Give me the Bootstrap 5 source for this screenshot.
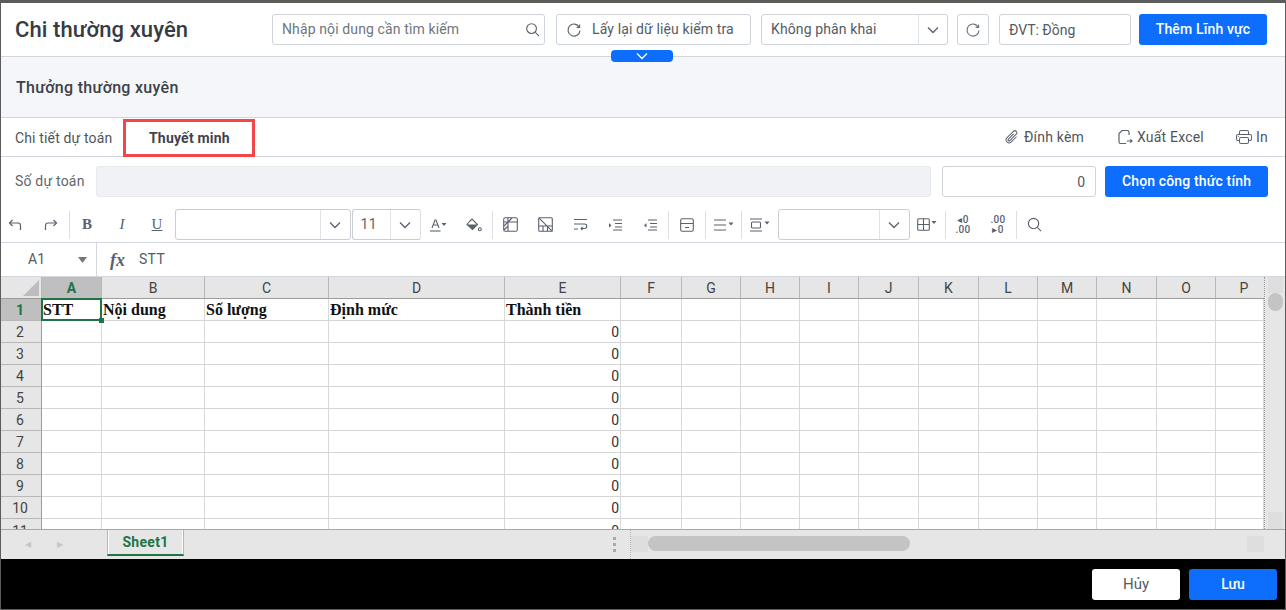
<!DOCTYPE html>
<html lang="vi">
<head>
<meta charset="utf-8">
<title>Chi thường xuyên</title>
<link href="https://cdn.jsdelivr.net/npm/bootstrap@5.3.0/dist/css/bootstrap.min.css" rel="stylesheet">
<style>
html,body{height:610px;overflow:hidden;background:#fff}
body{font-family:Roboto,"Liberation Sans",sans-serif;font-size:14px;color:#4a4f57}
.app-shell{height:610px;border:1px solid #5c5c5c;border-top:3px solid #5c5c5c;position:relative}
.top-head{height:54px;border-bottom:1px solid #d3d6de;padding-left:14px;flex:none}
.page-title{font-size:22px;font-weight:500;color:#363b42;margin:0;line-height:30px;letter-spacing:.1px}
.fld{height:31px;border:1px solid #cfd3da;border-radius:3px;background:#fff;font-size:14px;color:#555b63;flex:none;letter-spacing:.12px}
.fld-text{height:31px;border:1px solid #cfd3da;border-radius:3px;font-size:14px;padding:0 9px;color:#555b63;box-shadow:none;flex:none}
.fld-text::placeholder{color:#7b8087}
.c-search{width:273px;margin-right:11px;padding-left:9px}
.c-search input{border:0;outline:0;width:239px;font-size:14px;color:#555;background:transparent;padding:0;letter-spacing:.12px}
.c-search input::placeholder{color:#70757c}
.c-reload{width:195px;margin-right:10px}
.c-reload svg{margin:0 10px 0 9px}
.c-split{width:187px;margin-right:9px}
.c-split .cap{padding-left:9px}
.c-split .arr{width:29px;height:100%;border-left:1px solid #dfe2e7}
.c-ref{width:32px;margin-right:10px}
.c-unit{width:132px;margin-right:8px}
.btn-main{height:31px;border-radius:3px;font-size:14px;font-weight:500;padding:0;background:#0d6efd;border:0;flex:none;letter-spacing:.15px}
.c-add{width:128px;margin-right:18px}
.pull-tab{position:absolute;left:610px;top:47px;width:62px;height:12px;background:#0d6efd;border-radius:4px;z-index:3}
.sec-band{height:61px;background:#f4f6fa;border-bottom:1px solid #d3d6de;padding-left:15px;padding-top:1px;flex:none}
.sec-band h2{font-size:16px;font-weight:500;color:#3c4148;margin:0;letter-spacing:.3px}
.tab-band{height:39px;border-bottom:1px solid #d3d6de;flex:none;padding-left:14px}
.tab-off{width:108px;font-size:14px;color:#50555c;letter-spacing:.15px;padding-top:3px}
.tab-on{width:132px;height:38px;margin-top:2px;border:3px solid #f44649;font-weight:700;color:#3f444b;font-size:14px;padding-left:23px;letter-spacing:.2px}
.tool-link{font-size:14px;color:#50555c;letter-spacing:.2px}
.t-att{width:113px}.t-xl{width:119px}.t-pr{width:49px}
.est-row{height:47px;padding-left:14px;padding-top:2px;flex:none}
.est-lbl{width:81px;color:#61666d;font-size:14px;letter-spacing:.2px}
.est-box{width:835px;background:#f0f2f5!important;border-color:#e7e9ee;margin-right:11px}
.est-num{width:154px;text-align:right;margin-right:9px;padding-right:10px}
.c-pick{width:163px}
.fmt-bar{height:39px;border-bottom:1px solid #d3d6de;flex:none;padding-top:3px}
.tb-btn{width:35px;height:28px;flex:none;color:#5a626f}
.tb-a{width:28px}.tb-b{margin-left:4.5px}.tb-w{width:35.5px}.tb-x{width:36px}
.tb-sep{width:1px;height:28px;background:#dcdfe4;flex:none}
.let{font-family:"Liberation Serif",serif;font-size:15px;line-height:1;color:#5a626f}
.sel-box{height:31px;border:1px solid #c9cdd4;border-radius:3px;background:#fff;flex:none}
.s-font{width:176px;margin-right:1px}.s-size{width:69px;border-right-color:#dcdfe4}.s-fill{width:132px;margin-left:1px}
.sel-box .arr{width:30px;height:100%;border-left:1px solid #dfe2e7}
.s-size .cap{padding-left:8px;font-size:14px;color:#5f656d;letter-spacing:.5px}
.deci{font-size:10px;line-height:10px;font-weight:500;text-align:center;color:#5a626f;letter-spacing:.3px}
.form-line{height:34px;border-bottom:1px solid #d3d6de;flex:none}
.name-cell{width:96px;height:100%;border-right:1px solid #d3d6de;padding-left:27px;padding-right:9px;color:#555b63}
.fx-mark{font-family:"Liberation Serif",serif;font-style:italic;font-weight:700;font-size:18px;line-height:1;color:#5a626f;margin-left:13px;width:29px}
.form-val{color:#555b63;letter-spacing:.3px}
.sheet-area{height:252px;flex:none;overflow:hidden}
.sheet-view{width:1263px;overflow:hidden;flex:none}
.sheet-tbl{table-layout:fixed;border-collapse:separate;border-spacing:0;width:1263px}
.sheet-tbl th,.sheet-tbl td{height:22px;padding:0 2px;border-right:1px solid #d9d9d9;border-bottom:1px solid #d4d4d4;line-height:1;white-space:nowrap;overflow:hidden}
.sheet-tbl thead th{background:#e6e6e6;font-weight:400;text-align:center;color:#444;font-size:14px;border-bottom:1px solid #9c9c9c;border-right:1px solid #b8b8b8;height:22px}
.sheet-tbl thead th.tail{padding-left:10px;border-right:0}
.sheet-tbl tbody th{background:#e6e6e6;font-weight:400;text-align:center;color:#444;font-size:14px;border-right:1px solid #9c9c9c;border-bottom:1px solid #b8b8b8;padding:0 2px 0 0}
.sheet-tbl thead th.hot,.sheet-tbl tbody th.hot{background:#bfbfbf;color:#217346;font-weight:700}
.sheet-tbl td.hd{font-family:"Liberation Serif",serif;font-weight:700;font-size:16px;color:#111;padding-left:1px}
.sheet-tbl td.nu{text-align:right;font-size:14px;color:#333;padding-right:1px}
.sheet-tbl tbody tr:last-child th,.sheet-tbl tbody tr:last-child td{vertical-align:top;padding-top:5px}
.corner{position:relative;overflow:hidden}
.corner i{position:absolute;right:2px;bottom:2px;width:0;height:0;border-style:solid;border-width:0 0 16px 16px;border-color:transparent transparent #bdbdbd transparent}
.cur-box{position:relative;overflow:visible!important}
.cur-ring{position:absolute;left:-1px;top:-1px;right:-1px;bottom:-1px;border:2px solid #217346;z-index:2}
.cur-dot{position:absolute;right:-3px;bottom:-3px;width:5px;height:5px;background:#217346;z-index:3}
.v-rail{width:21px;background:#e6e6e6;border-left:1px dotted #9a9a9a;flex:none;padding:0 2px 0 3px}
.v-top{height:16px;background:#dedede}
.v-thumb{height:18px;background:#c4c4c4;border-radius:8px}
.v-end{height:17px;background:#dedede}
.tab-strip{height:30px;background:#e6e6e6;border-top:1px solid #a8a8a8;flex:none}
.nav-arrows{width:106px;padding-left:24px}
.nav-arrows span{width:32px;display:inline-block;color:#c6c6c6;font-size:8px}
.sheet-tab{width:77px;height:26px;background:#e6e6e6;border-left:1px solid #b5b5b5;border-right:1px solid #b5b5b5;border-bottom:2px solid #217346;color:#217346;font-weight:700;font-size:14px;letter-spacing:.3px;box-shadow:inset 1px 0 #fff,inset -1px 0 #fff}
.strip-fill{width:446px;padding-right:14px}
.grip{width:3px;height:3px;background:#a9a9a9;margin:1px 0 2px}
.h-rail{height:100%;border-left:1px dotted #b5b5b5;flex:1;padding-right:21px;padding-top:6px}
.h-end{width:17px;height:16px;background:#dedede;flex:none}
.h-thumb{width:262px;height:15px;background:#c4c4c4;border-radius:8px;flex:none}
.foot-band{background:#000;flex:1;padding-right:8px;gap:9px}
.foot-btn{width:88px;height:31px;border-radius:3px;font-size:14px;padding:0}
.foot-off{background:#fff;color:#555b63;border:0;font-size:15px}
.foot-on{font-weight:500;background:#0d6efd;border:0}
</style>
</head>
<body>
<div class="app-shell d-flex flex-column">

  <header class="top-head d-flex align-items-center">
    <h1 class="page-title flex-grow-1">Chi thường xuyên</h1>
    <div class="fld c-search d-flex align-items-center">
      <input type="text" placeholder="Nhập nội dung cần tìm kiếm" aria-label="Tìm kiếm">
      <svg width="15" height="15" viewBox="0 0 16 16" fill="none" stroke="#5a626f" stroke-width="1.2" class="ms-1"><circle cx="7" cy="7" r="5.2"/><path d="M11 11l4 4"/></svg>
    </div>
    <div class="fld c-reload d-flex align-items-center">
      <svg width="16" height="16" viewBox="0 0 16 16" fill="none" stroke="#5a626f" stroke-width="1.1"><path d="M13.3 5.2A6 6 0 1 0 14 8.6"/><path d="M13.6 2.4v3h-3"/></svg>
      <span>Lấy lại dữ liệu kiểm tra</span>
    </div>
    <div class="fld c-split d-flex align-items-center justify-content-between">
      <span class="cap">Không phân khai</span>
      <span class="arr d-flex align-items-center justify-content-center"><svg width="12" height="8" viewBox="0 0 12 8" fill="none" stroke="#5a626f" stroke-width="1.3"><path d="M1 1.5l5 5 5-5"/></svg></span>
    </div>
    <div class="fld c-ref d-flex align-items-center justify-content-center">
      <svg width="16" height="16" viewBox="0 0 16 16" fill="none" stroke="#6b7280" stroke-width="1.1"><path d="M13.3 5.2A6 6 0 1 0 14 8.6"/><path d="M13.6 2.4v3h-3"/></svg>
    </div>
    <input class="form-control fld-text c-unit" type="text" value="ĐVT: Đồng" aria-label="Đơn vị tính">
    <button type="button" class="btn btn-primary btn-main c-add">Thêm Lĩnh vực</button>
  </header>

  <div class="pull-tab d-flex align-items-center justify-content-center">
    <svg width="12" height="8" viewBox="0 0 12 8" fill="none" stroke="#fff" stroke-width="1.4"><path d="M1 1.5l5 5 5-5"/></svg>
  </div>

  <section class="sec-band d-flex align-items-center"><h2>Thưởng thường xuyên</h2></section>

  <div class="tab-band d-flex align-items-center">
    <div class="tab-off">Chi tiết dự toán</div>
    <div class="tab-on d-flex align-items-center">Thuyết minh</div>
    <div class="ms-auto d-flex align-items-center">
      <div class="tool-link t-att d-flex align-items-center gap-1">
        <svg width="16" height="16" viewBox="0 0 16 16" fill="#5a626f" style="transform:rotate(45deg)"><path d="M4.5 3a2.5 2.5 0 0 1 5 0v9a1.5 1.5 0 0 1-3 0V5a.5.5 0 0 1 1 0v7a.5.5 0 0 0 1 0V3a1.5 1.5 0 1 0-3 0v9a2.5 2.5 0 0 0 5 0V5a.5.5 0 0 1 1 0v7a3.5 3.5 0 1 1-7 0V3z"/></svg>
        <span>Đính kèm</span>
      </div>
      <div class="tool-link t-xl d-flex align-items-center gap-1">
        <svg width="16" height="16" viewBox="0 0 16 16" fill="none" stroke="#5a626f" stroke-width="1.2"><path d="M12 6V3a1.500 1.500 0 0 0-1.500-1.500H5L2 4.500V13a1.500 1.500 0 0 0 1.500 1.500H9"/><path d="M10 12h5M13.300 10.300L15 12l-1.700 1.700"/></svg>
        <span>Xuất Excel</span>
      </div>
      <div class="tool-link t-pr d-flex align-items-center gap-1">
        <svg width="16" height="16" viewBox="0 0 16 16" fill="#5a626f"><path d="M2.5 8a.5.5 0 1 0 0-1 .5.5 0 0 0 0 1z"/><path d="M5 1a2 2 0 0 0-2 2v2H2a2 2 0 0 0-2 2v3a2 2 0 0 0 2 2h1v1a2 2 0 0 0 2 2h6a2 2 0 0 0 2-2v-1h1a2 2 0 0 0 2-2V7a2 2 0 0 0-2-2h-1V3a2 2 0 0 0-2-2H5zM4 3a1 1 0 0 1 1-1h6a1 1 0 0 1 1 1v2H4V3zm1 5a2 2 0 0 0-2 2v1H2a1 1 0 0 1-1-1V7a1 1 0 0 1 1-1h12a1 1 0 0 1 1 1v3a1 1 0 0 1-1 1h-1v-1a2 2 0 0 0-2-2H5zm7 2v3a1 1 0 0 1-1 1H5a1 1 0 0 1-1-1v-3a1 1 0 0 1 1-1h6a1 1 0 0 1 1 1z"/></svg>
        <span>In</span>
      </div>
    </div>
  </div>

  <div class="est-row d-flex align-items-center">
    <span class="est-lbl">Số dự toán</span>
    <input class="form-control fld-text est-box" type="text" disabled aria-label="Số dự toán">
    <input class="form-control fld-text est-num" type="text" value="0" aria-label="Giá trị">
    <button type="button" class="btn btn-primary btn-main c-pick">Chọn công thức tính</button>
  </div>

  <div class="fmt-bar d-flex align-items-center">
    <span class="tb-btn tb-a d-flex align-items-center justify-content-center"><svg width="14" height="12" viewBox="0 0 14 12" fill="none" stroke="#5a626f" stroke-width="1.2"><path d="M4.5 1L1.5 4l3 3"/><path d="M1.5 4H10a2.5 2.5 0 0 1 2.5 2.5V11"/></svg></span>
    <span class="tb-btn tb-b d-flex align-items-center justify-content-center"><svg width="14" height="12" viewBox="0 0 14 12" fill="none" stroke="#5a626f" stroke-width="1.2"><path d="M9.5 1l3 3-3 3"/><path d="M12.5 4H4A2.5 2.5 0 0 0 1.5 6.5V11"/></svg></span>
    <span class="tb-sep"></span>
    <span class="tb-btn d-flex align-items-center justify-content-center let fw-bold">B</span>
    <span class="tb-btn d-flex align-items-center justify-content-center let fst-italic">I</span>
    <span class="tb-btn d-flex align-items-center justify-content-center let text-decoration-underline">U</span>
    <div class="sel-box s-font d-flex justify-content-end"><span class="arr d-flex align-items-center justify-content-center"><svg width="12" height="8" viewBox="0 0 12 8" fill="none" stroke="#5a626f" stroke-width="1.3"><path d="M1 1.5l5 5 5-5"/></svg></span></div>
    <div class="sel-box s-size d-flex align-items-center justify-content-between"><span class="cap">11</span><span class="arr d-flex align-items-center justify-content-center"><svg width="12" height="8" viewBox="0 0 12 8" fill="none" stroke="#5a626f" stroke-width="1.3"><path d="M1 1.5l5 5 5-5"/></svg></span></div>
    <span class="tb-btn tb-w d-flex align-items-center justify-content-center"><svg width="18" height="14" viewBox="0 0 18 14" fill="none" stroke="#5a626f" stroke-width="1.1"><path d="M3 10L6 2h1l3 8M4 7h5"/><path d="M1 13h10.500"/><path d="M12.500 5h5l-2.500 3z" fill="#5a626f" stroke="none"/></svg></span>
    <span class="tb-btn tb-w d-flex align-items-center justify-content-center"><svg width="16" height="14" viewBox="0 0 16 14" fill="none" stroke="#5a626f" stroke-width="1.1"><path d="M3.500 3.500L6 1l5.500 5.500-5 5L1 6.500z"/><path d="M1 6.500h10.500l-5 5z" fill="#5a626f" stroke="none"/><circle cx="13.800" cy="11.300" r="1.500"/></svg></span>
    <span class="tb-sep"></span>
    <span class="tb-btn d-flex align-items-center justify-content-center"><svg width="15" height="15" viewBox="0 0 15 15" fill="none" stroke="#5a626f" stroke-width="1.1"><rect x=".7" y=".7" width="13.600" height="13.600" rx="1.500"/><path d="M.7 5h13.600M5 14V.7M1 9l8-8M1 13L5 9M5 5l4-4"/></svg></span>
    <span class="tb-btn d-flex align-items-center justify-content-center"><svg width="15" height="15" viewBox="0 0 15 15" fill="none" stroke="#5a626f" stroke-width="1.1"><rect x=".7" y=".7" width="13.600" height="13.600" rx="1"/><path d="M.7 9h13.600M5 9v5.300M9.500 9v5.300M.7.700l13.600 13.600"/></svg></span>
    <span class="tb-btn d-flex align-items-center justify-content-center"><svg width="15" height="13" viewBox="0 0 15 13" fill="none" stroke="#5a626f" stroke-width="1.1"><path d="M1 1.500h13M1 6h10.500a2 2 0 0 1 0 4.500H8M1 11h4"/><path d="M9.500 8.800L8 10.500l1.500 1.700"/></svg></span>
    <span class="tb-btn d-flex align-items-center justify-content-center"><svg width="14" height="12" viewBox="0 0 14 12" fill="none" stroke="#5a626f" stroke-width="1.1"><path d="M5 1h9M7 4.500h7M7 8h7M5 11h9"/><path d="M1 4l2.500 2.500L1 8.500z" fill="#5a626f" stroke="none"/></svg></span>
    <span class="tb-btn d-flex align-items-center justify-content-center"><svg width="14" height="12" viewBox="0 0 14 12" fill="none" stroke="#5a626f" stroke-width="1.1"><path d="M5 1h9M7 4.500h7M7 8h7M5 11h9"/><path d="M3.500 4L1 6.500l2.500 2z" fill="#5a626f" stroke="none"/></svg></span>
    <span class="tb-sep"></span>
    <span class="tb-btn tb-x d-flex align-items-center justify-content-center"><svg width="14" height="14" viewBox="0 0 14 14" fill="none" stroke="#5a626f" stroke-width="1.1"><rect x=".7" y=".7" width="12.600" height="12.600" rx="1.500"/><path d="M.7 5.500h12.600M5 9.500h4"/></svg></span>
    <span class="tb-sep"></span>
    <span class="tb-btn d-flex align-items-center justify-content-center"><svg width="21" height="12" viewBox="0 0 21 12" fill="none" stroke="#5a626f" stroke-width="1.2"><path d="M1 1h12M1 6h12M1 11h12"/><path d="M15.500 3.500h5l-2.500 3z" fill="#5a626f" stroke="none"/></svg></span>
    <span class="tb-sep"></span>
    <span class="tb-btn d-flex align-items-center justify-content-center"><svg width="21" height="14" viewBox="0 0 21 14" fill="none" stroke="#5a626f" stroke-width="1.1"><path d="M1 1h12M1 13h12"/><rect x="2.500" y="4" width="9" height="6" rx="1"/><path d="M15.500 3.500h5l-2.500 3z" fill="#5a626f" stroke="none"/></svg></span>
    <div class="sel-box s-fill d-flex justify-content-end"><span class="arr d-flex align-items-center justify-content-center"><svg width="12" height="8" viewBox="0 0 12 8" fill="none" stroke="#5a626f" stroke-width="1.3"><path d="M1 1.5l5 5 5-5"/></svg></span></div>
    <span class="tb-btn d-flex align-items-center justify-content-center"><svg width="20" height="13" viewBox="0 0 20 13" fill="none" stroke="#5a626f" stroke-width="1.1"><rect x=".7" y=".7" width="11.600" height="11.600" rx="1"/><path d="M.7 6.500h11.600M6.500.7v11.600"/><path d="M14.500 3h5L17 6z" fill="#5a626f" stroke="none"/></svg></span>
    <span class="tb-sep"></span>
    <span class="tb-btn d-flex flex-column align-items-center justify-content-center deci"><span>◂0</span><span>.00</span></span>
    <span class="tb-btn d-flex flex-column align-items-center justify-content-center deci"><span>.00</span><span>▸0</span></span>
    <span class="tb-sep"></span>
    <span class="tb-btn d-flex align-items-center justify-content-center"><svg width="15" height="15" viewBox="0 0 16 16" fill="none" stroke="#5a626f" stroke-width="1.2"><circle cx="7" cy="7" r="5.500"/><path d="M11 11l4 4"/></svg></span>
  </div>

  <div class="form-line d-flex align-items-center">
    <div class="name-cell d-flex align-items-center justify-content-between"><span>A1</span><svg width="9" height="6" viewBox="0 0 9 6" fill="#777"><path d="M0 0h9L4.500 6z"/></svg></div>
    <span class="fx-mark">fx</span>
    <span class="form-val">STT</span>
  </div>

  <div class="sheet-area d-flex">
    <div class="sheet-view">
      <table class="sheet-tbl">
        <colgroup><col style="width:41px"><col style="width:60px"><col style="width:103px"><col style="width:124px"><col style="width:176px"><col style="width:116px"><col style="width:61px"><col style="width:59px"><col style="width:59px"><col style="width:59px"><col style="width:60px"><col style="width:60px"><col style="width:59px"><col style="width:59px"><col style="width:60px"><col style="width:59px"><col style="width:48px"></colgroup>
        <thead><tr><th class="corner"><i></i></th><th class="hot">A</th><th>B</th><th>C</th><th>D</th><th>E</th><th>F</th><th>G</th><th>H</th><th>I</th><th>J</th><th>K</th><th>L</th><th>M</th><th>N</th><th>O</th><th class="tail">P</th></tr></thead>
        <tbody>
          <tr><th class="hot">1</th><td class="hd cur-box">STT<span class="cur-ring"></span><span class="cur-dot"></span></td><td class="hd">Nội dung</td><td class="hd">Số lượng</td><td class="hd">Định mức</td><td class="hd">Thành tiền</td><td></td><td></td><td></td><td></td><td></td><td></td><td></td><td></td><td></td><td></td><td></td></tr>
          <tr><th>2</th><td></td><td></td><td></td><td></td><td class="nu">0</td><td></td><td></td><td></td><td></td><td></td><td></td><td></td><td></td><td></td><td></td><td></td></tr>
          <tr><th>3</th><td></td><td></td><td></td><td></td><td class="nu">0</td><td></td><td></td><td></td><td></td><td></td><td></td><td></td><td></td><td></td><td></td><td></td></tr>
          <tr><th>4</th><td></td><td></td><td></td><td></td><td class="nu">0</td><td></td><td></td><td></td><td></td><td></td><td></td><td></td><td></td><td></td><td></td><td></td></tr>
          <tr><th>5</th><td></td><td></td><td></td><td></td><td class="nu">0</td><td></td><td></td><td></td><td></td><td></td><td></td><td></td><td></td><td></td><td></td><td></td></tr>
          <tr><th>6</th><td></td><td></td><td></td><td></td><td class="nu">0</td><td></td><td></td><td></td><td></td><td></td><td></td><td></td><td></td><td></td><td></td><td></td></tr>
          <tr><th>7</th><td></td><td></td><td></td><td></td><td class="nu">0</td><td></td><td></td><td></td><td></td><td></td><td></td><td></td><td></td><td></td><td></td><td></td></tr>
          <tr><th>8</th><td></td><td></td><td></td><td></td><td class="nu">0</td><td></td><td></td><td></td><td></td><td></td><td></td><td></td><td></td><td></td><td></td><td></td></tr>
          <tr><th>9</th><td></td><td></td><td></td><td></td><td class="nu">0</td><td></td><td></td><td></td><td></td><td></td><td></td><td></td><td></td><td></td><td></td><td></td></tr>
          <tr><th>10</th><td></td><td></td><td></td><td></td><td class="nu">0</td><td></td><td></td><td></td><td></td><td></td><td></td><td></td><td></td><td></td><td></td><td></td></tr>
          <tr><th>11</th><td></td><td></td><td></td><td></td><td class="nu">0</td><td></td><td></td><td></td><td></td><td></td><td></td><td></td><td></td><td></td><td></td><td></td></tr>
        </tbody>
      </table>
    </div>
    <div class="v-rail d-flex flex-column">
      <div class="v-top"></div>
      <div class="v-thumb"></div>
      <div class="v-end mt-auto"></div>
    </div>
  </div>

  <div class="tab-strip d-flex align-items-start">
    <div class="nav-arrows d-flex align-items-center h-100"><span>◀</span><span>▶</span></div>
    <div class="sheet-tab d-flex align-items-center justify-content-center">Sheet1</div>
    <div class="strip-fill h-100 d-flex flex-column align-items-end justify-content-center"><span class="grip"></span><span class="grip"></span><span class="grip"></span></div>
    <div class="h-rail d-flex align-items-start">
      <div class="h-end"></div>
      <div class="h-thumb"></div>
      <div class="h-end ms-auto"></div>
    </div>
  </div>

  <footer class="foot-band d-flex align-items-center justify-content-end">
    <button type="button" class="btn foot-btn foot-off">Hủy</button>
    <button type="button" class="btn btn-primary foot-btn foot-on">Lưu</button>
  </footer>
</div>
<script src="https://cdn.jsdelivr.net/npm/bootstrap@5.3.0/dist/js/bootstrap.bundle.min.js"></script>
</body>
</html>
